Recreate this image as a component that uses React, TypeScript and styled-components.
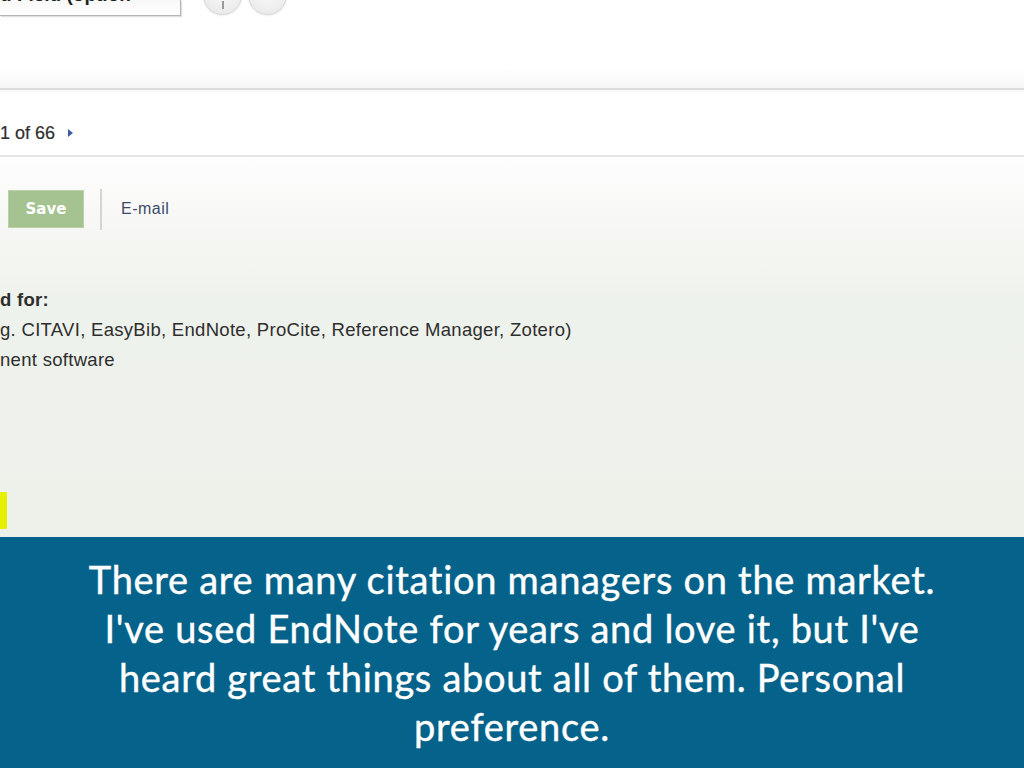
import React from 'react';
import styled, { createGlobalStyle } from 'styled-components';

const GlobalStyle = createGlobalStyle`
  html, body {
    margin: 0;
    padding: 0;
    background: #ffffff;
  }
  body {
    font-family: 'Liberation Sans', Arial, sans-serif;
  }
`;

const caption = [
  'There are many citation managers on the market.',
  "I've used EndNote for years and love it, but I've",
  'heard great things about all of them. Personal',
  'preference.',
];

const exportLines = [
  { text: 'd for:', bold: true },
  { text: 'g. CITAVI, EasyBib, EndNote, ProCite, Reference Manager, Zotero)', bold: false },
  { text: 'nent software', bold: false },
];

const App: React.FC = () => (
  <>
    <GlobalStyle />
    <Page>
      <Header>
        <FieldInput>
          <FieldText>d Field (option</FieldText>
        </FieldInput>
        <CircleButton>
          <Tick />
        </CircleButton>
        <CircleButton />
      </Header>
      <Divider tone="#dcdcdc" />
      <Pager>
        <PagerText>1 of 66</PagerText>
        <NextArrow />
      </Pager>
      <Divider tone="#e6e6e6" />
      <Content>
        <Toolbar>
          <SaveButton>Save</SaveButton>
          <Separator />
          <MailLink>E-mail</MailLink>
        </Toolbar>
        <ExportList>
          {exportLines.map(line => (
            <ExportLine key={line.text} bold={line.bold}>
              {line.text}
            </ExportLine>
          ))}
        </ExportList>
        <Marker />
      </Content>
      <Banner>
        {caption.map(line => (
          <CaptionLine key={line}>{line}</CaptionLine>
        ))}
      </Banner>
    </Page>
  </>
);

const Page = styled.div`
  width: 1024px;
  height: 768px;
  overflow: hidden;
  display: flex;
  flex-direction: column;
`;

const Header = styled.div`
  height: 88px;
  flex-shrink: 0;
  display: flex;
  align-items: flex-start;
  gap: 6px;
  background: linear-gradient(to bottom, #ffffff 0, #ffffff 68px, #f6f6f6 88px);
`;

const FieldInput = styled.div`
  width: 181px;
  height: 16px;
  margin-right: 16px;
  box-sizing: border-box;
  border-bottom: 1px solid #b4b4b4;
  border-right: 1px solid #b4b4b4;
  box-shadow: 1px 1px 1px rgba(0, 0, 0, 0.12);
  background: linear-gradient(to bottom, #f8f8f8, #ffffff);
  overflow: hidden;
`;

const FieldText = styled.div`
  margin-top: -16px;
  font-size: 19px;
  font-weight: bold;
  line-height: 22px;
  color: #222;
  white-space: nowrap;
`;

const CircleButton = styled.div`
  position: relative;
  width: 39px;
  height: 39px;
  margin-top: -24px;
  border-radius: 50%;
  flex-shrink: 0;
  box-sizing: border-box;
  border: 1px solid #d6d6d6;
  background: radial-gradient(circle at 50% 40%, #fafafa 0, #ececec 70%, #e0e0e0 100%);
  box-shadow: 0 1px 2px rgba(0, 0, 0, 0.08);
`;

const Tick = styled.div`
  position: absolute;
  left: 18px;
  top: 24px;
  width: 2px;
  height: 8px;
  background: #9a9a9a;
`;

const Divider = styled.div<{ tone: string }>`
  height: 2px;
  flex-shrink: 0;
  background: ${p => p.tone};
`;

const Pager = styled.div`
  height: 65px;
  flex-shrink: 0;
  display: flex;
  align-items: center;
  gap: 13px;
  padding-top: 21px;
  box-sizing: border-box;
  background: linear-gradient(to bottom, #f8f8f8 0, #ffffff 6px);
`;

const PagerText = styled.span`
  font-size: 18px;
  color: #2e2e2e;
  -webkit-text-stroke: 0.2px #2e2e2e;
`;

const NextArrow = styled.span`
  width: 0;
  height: 0;
  border-top: 4.5px solid transparent;
  border-bottom: 4.5px solid transparent;
  border-left: 5px solid #3a5ea8;
`;

const Content = styled.div`
  flex: 1;
  display: flex;
  flex-direction: column;
  align-items: flex-start;
  padding-top: 31px;
  background: linear-gradient(to bottom, #fdfdfd 0, #fbfbfa 30px, #f4f6f2 90px, #eef2ec 140px, #edf1ea 100%);
`;

const Toolbar = styled.div`
  display: flex;
  align-items: center;
  height: 42px;
`;

const SaveButton = styled.div`
  width: 76px;
  height: 38px;
  margin-left: 8px;
  display: flex;
  align-items: center;
  justify-content: center;
  background: #a5c291;
  border: 1px solid #b9d0a8;
  box-sizing: border-box;
  color: #ffffff;
  font-size: 15px;
  font-weight: bold;
  font-family: 'DejaVu Sans', sans-serif;
`;

const Separator = styled.div`
  width: 2px;
  height: 41px;
  margin-left: 16px;
  background: #d4d6d2;
`;

const MailLink = styled.span`
  margin-left: 19px;
  font-size: 16px;
  color: #3b4a68;
  letter-spacing: 0.5px;
`;

const ExportList = styled.div`
  margin-top: 55px;
  display: flex;
  flex-direction: column;
`;

const ExportLine = styled.div<{ bold: boolean }>`
  height: 30px;
  line-height: 30px;
  font-size: 18.5px;
  letter-spacing: 0.3px;
  color: #2e2e2e;
  font-weight: ${p => (p.bold ? 'bold' : 'normal')};
  white-space: nowrap;
`;

const Marker = styled.div`
  width: 7px;
  height: 37px;
  margin-top: 117px;
  background: #e6f000;
`;

const Banner = styled.div`
  height: 231px;
  flex-shrink: 0;
  box-sizing: border-box;
  padding-top: 18px;
  background: #05628a;
  display: flex;
  flex-direction: column;
  align-items: center;
`;

const CaptionLine = styled.div`
  height: 49px;
  line-height: 49px;
  font-family: Lato, 'Noto Sans', sans-serif;
  font-size: 38px;
  letter-spacing: 0.7px;
  color: #ffffff;
  -webkit-text-stroke: 0.4px #ffffff;
  white-space: nowrap;
`;

export default App;
